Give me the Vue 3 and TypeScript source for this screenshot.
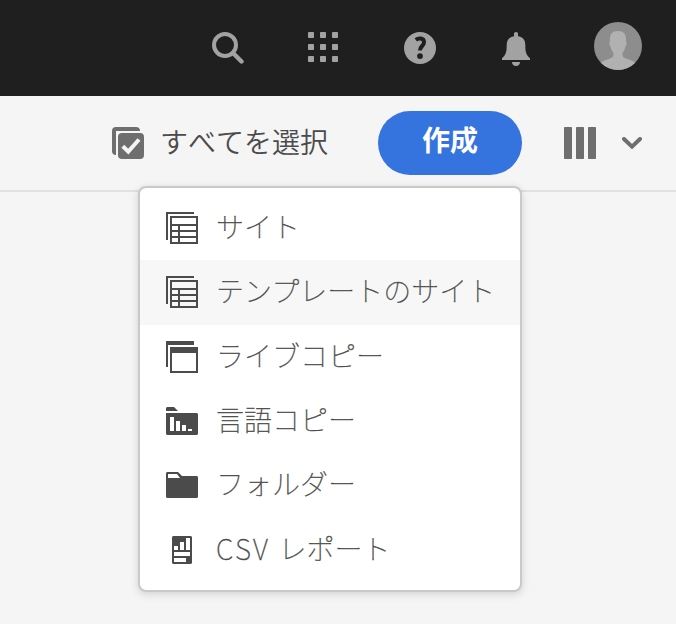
<script setup lang="ts">
interface MenuItem {
  latin?: string
  label: string
  icon: 'site' | 'live' | 'language' | 'folder' | 'report'
  active?: boolean
}

const items: MenuItem[] = [
  { label: 'サイト', icon: 'site' },
  { label: 'テンプレートのサイト', icon: 'site', active: true },
  { label: 'ライブコピー', icon: 'live' },
  { label: '言語コピー', icon: 'language' },
  { label: 'フォルダー', icon: 'folder' },
  { latin: 'CSV ', label: 'レポート', icon: 'report' },
]

const iconPaths: Record<MenuItem['icon'], string> = {
  site: 'M0 0H28V2H2V28H0ZM4 4H32V32H4ZM6 6V12H30V6ZM6 14V18H12V14ZM14 14V18H30V14ZM6 20V24H12V20ZM14 20V24H30V20ZM6 26V30H12V26ZM14 26V30H30V26Z',
  live: 'M0 0H28V4H2V26H0ZM4 6H32V32H4ZM6 12V30H30V12Z',
  language: 'M1 2H8L12 6H0V3ZM0 8H31L32 9V29L31 30H1L0 29ZM4 12V26H8V12ZM10 16V26H14V16ZM16 20V26H20V20ZM22 24V26H26V24Z',
  folder: 'M1 3H12L16 7H31L32 8V28L31 29H1L0 28V4ZM2 5V9H14L11 5Z',
  report: 'M7 2H25L26 3V29L25 30H7L6 29V3ZM8 12V16H12V12ZM14 8V16H18V8ZM20 4V16H24V4ZM8 18V22H24V18ZM8 24V28H20V24Z',
}
</script>

<template>
  <div class="page">
    <header class="topbar">
      <svg class="search" width="32" height="32" viewBox="0 0 32 32">
        <circle cx="13" cy="13" r="11" fill="none" stroke="#a2a2a2" stroke-width="4" />
        <path d="M21 21L29.5 29.5" stroke="#a2a2a2" stroke-width="4.4" stroke-linecap="round" />
      </svg>
      <svg class="apps" width="30" height="30" viewBox="0 0 30 30" fill="#a2a2a2">
        <template v-for="r in 3" :key="r">
          <rect v-for="c in 3" :key="c" :x="(c - 1) * 12" :y="(r - 1) * 12" width="6" height="6" rx="0.8" />
        </template>
      </svg>
      <svg class="help" width="32" height="32" viewBox="0 0 32 32">
        <circle cx="16" cy="16" r="16" fill="#a2a2a2" />
        <path d="M11.8 7.8C14.5 5.7 20 5.8 20 10.2C20 14 15.9 14.1 15.9 18.6" fill="none" stroke="#1f1f1f" stroke-width="4" />
        <circle cx="16" cy="24.1" r="2.9" fill="#1f1f1f" />
      </svg>
      <svg class="bell" width="28" height="34" viewBox="0 0 28 34" fill="#a2a2a2">
        <path d="M12 4.3V1.5Q12 0 14 0Q16 0 16 1.5V4.3C21 5 23.3 8 23.3 13C23.3 20 24.2 23 28 26.3V28H0V26.3C3.8 23 4.7 20 4.7 13C4.7 8 7 5 12 4.3Z" />
        <path d="M10 30H18C18 32.5 16.2 34 14 34C11.8 34 10 32.5 10 30Z" />
      </svg>
      <svg class="avatar" width="48" height="48" viewBox="0 0 48 48">
        <circle cx="24" cy="24" r="24" fill="#8d8d8d" />
        <path d="M6.8 40.7C11 37.3 19.5 37 19.5 33V31C17.7 28.8 17 26.8 16.7 24.8C15.3 24 14.9 20 16 19.5C15.4 12.5 18 9 24 9C30 9 32.6 12.5 32 19.5C33.1 20 32.7 24 31.3 24.8C31 26.8 30.3 28.8 28.5 31V33C28.5 37 37 37.3 41.2 40.7A24 24 0 0 1 6.8 40.7Z" fill="#b1b1b1" />
      </svg>
    </header>

    <div class="toolbar">
      <div class="select-all">
        <svg width="32" height="32" viewBox="0 0 32 32">
          <path d="M0 28V4Q0 0 4 0H24Q28 0 28 4H4V28Q0 28 0 24Z" fill="#6e6e6e" />
          <rect x="6" y="6" width="26" height="26" rx="4" fill="#6e6e6e" />
          <path d="M10.8 19.2L16.3 24.6L27 12.5" fill="none" stroke="#f5f5f5" stroke-width="4" />
        </svg>
        <span>すべてを選択</span>
      </div>
      <div class="create-anchor">
        <button class="create">作成</button>
        <div class="menu">
          <div v-for="item in items" :key="item.label" class="item" :class="{ active: item.active }">
            <svg width="32" height="32" viewBox="0 0 32 32">
              <path :d="iconPaths[item.icon]" fill="#4b4b4b" fill-rule="evenodd" />
            </svg>
            <span class="label"><span v-if="item.latin" class="latin">{{ item.latin }}</span>{{ item.label }}</span>
          </div>
        </div>
      </div>
      <svg class="columns" width="32" height="32" viewBox="0 0 32 32" fill="#6e6e6e">
        <rect width="8" height="32" rx="0.7" />
        <rect x="12" width="8" height="32" rx="0.7" />
        <rect x="24" width="8" height="32" rx="0.7" />
      </svg>
      <svg class="chevron" width="20" height="12" viewBox="0 0 20 12">
        <path d="M2 2L10 9.6L18 2" fill="none" stroke="#6e6e6e" stroke-width="4" stroke-linecap="round" />
      </svg>
    </div>
  </div>
</template>

<style>
body {
  margin: 0;
  background: #f5f5f5;
}
</style>

<style scoped>
.page {
  width: 676px;
  height: 624px;
  overflow: hidden;
  background: #f5f5f5;
  font-family: "Noto Sans CJK JP", sans-serif;
  font-size: 28px;
}

svg {
  display: block;
  flex: none;
}

.topbar {
  display: flex;
  align-items: flex-start;
  box-sizing: border-box;
  height: 96px;
  padding: 32px 34px 0 212px;
  background: #1f1f1f;
}

.apps {
  margin-left: 64px;
}

.help {
  margin-left: 66px;
}

.bell {
  margin-left: 66px;
}

.avatar {
  margin: -10px 0 0 64px;
}

.toolbar {
  display: flex;
  align-items: center;
  box-sizing: border-box;
  height: 96px;
  padding: 0 34px 0 112px;
  border-bottom: 2px solid #e1e1e1;
}

.select-all {
  display: flex;
  align-items: center;
  gap: 16px;
  width: 266px;
  color: #4b4b4b;
  font-weight: 350;
  font-kerning: none;
  line-height: 40px;
  white-space: nowrap;
}

.select-all span {
  padding-bottom: 4px;
}

.create-anchor {
  position: relative;
}

.create {
  display: block;
  width: 144px;
  height: 64px;
  padding: 0 0 8px;
  border: 0;
  border-radius: 32px;
  background: #3573df;
  color: #fff;
  font: 700 28px/40px "Noto Sans CJK JP", sans-serif;
}

.columns {
  margin-left: 42px;
}

.chevron {
  margin-left: 26px;
}

.menu {
  position: absolute;
  top: 75px;
  right: 0;
  display: grid;
  grid-template-rows: 64px 65px 64px 64px 65px 64px;
  box-sizing: border-box;
  width: 384px;
  height: 406px;
  padding: 8px 0;
  border: 2px solid #c9c9c9;
  border-radius: 8px;
  background: #fff;
  box-shadow: 0 2px 8px rgba(0, 0, 0, 0.15);
}

.item {
  display: flex;
  align-items: flex-start;
  gap: 18px;
  padding: 16px 20px 0 26px;
  color: #4b4b4b;
  font-weight: 100;
  line-height: 28px;
  white-space: nowrap;
  -webkit-text-stroke: 0.35px #4b4b4b;
}

.latin {
  letter-spacing: 2.2px;
  white-space: pre;
}

.item.active {
  background: #f7f7f7;
}
</style>
